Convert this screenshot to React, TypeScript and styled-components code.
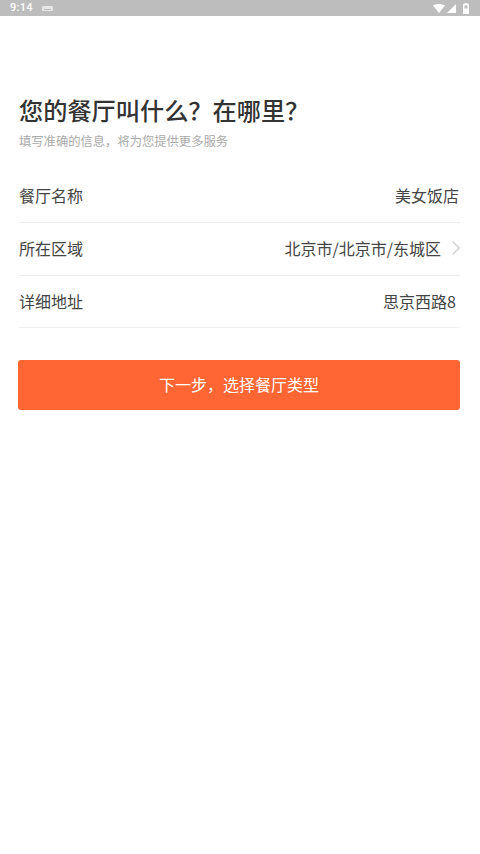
import styled, { createGlobalStyle } from "styled-components";

const GlobalStyle = createGlobalStyle`
  html, body {
    margin: 0;
    padding: 0;
    background: #fff;
  }
  body {
    font-family: "Noto Sans CJK SC", sans-serif;
  }
`;

const Page = styled.div`
  width: 480px;
  height: 854px;
  background: #fff;
  overflow: hidden;
`;

const StatusBar = styled.div`
  height: 16px;
  background: #bdbdbd;
  display: flex;
  align-items: center;
  padding: 0 11px 0 10px;
  color: #fff;
`;

const StatusLeft = styled.div`
  display: flex;
  align-items: center;
  gap: 9px;
  flex: 1;
`;

const Clock = styled.span`
  font-family: "Roboto", sans-serif;
  font-size: 11px;
  font-weight: 500;
  line-height: 16px;
  letter-spacing: 0.3px;
`;

const StatusRight = styled.div`
  display: flex;
  align-items: center;
  gap: 2px;
`;

const BatteryIcon = styled.svg`
  margin-left: 5px;
`;

const Content = styled.main`
  padding: 78px 20px 0 18px;
`;

const Heading = styled.header`
  padding-left: 1px;
`;

const Title = styled.h1`
  margin: 0;
  font-size: 24.2px;
  line-height: 32px;
  font-weight: 500;
  color: #333;
`;

const Subtitle = styled.p`
  margin: 6px 0 0;
  font-size: 12.3px;
  line-height: 18px;
  color: #aaa;
`;

const Form = styled.div`
  margin-top: 20px;
`;

const Row = styled.div`
  height: 52px;
  box-sizing: content-box;
  display: flex;
  align-items: center;
  justify-content: space-between;
  padding-left: 1px;
  border-bottom: 1px solid #eee;
`;

const RowInner = styled.div`
  flex: 1;
  display: flex;
  align-items: center;
  justify-content: space-between;
  padding-bottom: 2px;
  height: 100%;
  box-sizing: border-box;
`;

const LastRow = styled(Row)`
  height: 51px;
  border-bottom-color: #f0f0f0;
`;

const Label = styled.span`
  font-size: 16px;
  line-height: 20px;
  color: #444;
`;

const Value = styled.span<{ $inset?: number }>`
  font-size: 16px;
  line-height: 20px;
  color: #444;
  padding-right: ${(p) => p.$inset ?? 0}px;
`;

const ValueGroup = styled.div`
  display: flex;
  align-items: center;
  gap: 11px;
`;

const NextButton = styled.button`
  display: block;
  width: 100%;
  height: 50px;
  margin-top: 32px;
  border: none;
  border-radius: 3px;
  background: #ff6633;
  color: #fff;
  font-size: 16px;
  font-family: "Noto Sans CJK SC", sans-serif;
  padding: 0 0 2px;
`;

const App = () => {
  return (
    <Page>
      <GlobalStyle />
      <StatusBar>
        <StatusLeft>
          <Clock>9:14</Clock>
          <svg width="11" height="5" viewBox="0 0 11 5">
            <rect width="11" height="5" rx="1" fill="#e6e6e6" />
            <rect x="2" y="3" width="7" height="1" fill="#bdbdbd" />
          </svg>
        </StatusLeft>
        <StatusRight>
          <svg width="12" height="9" viewBox="0 0 12 9">
            <path d="M0 1.5C3.5 -0.5 8.5 -0.5 12 1.5L6 9Z" fill="#fff" />
          </svg>
          <svg width="9" height="9" viewBox="0 0 9 9">
            <path d="M9 0V9H0Z" fill="#fff" />
          </svg>
          <BatteryIcon width="6" height="11" viewBox="0 0 6 11">
            <path d="M1.5 0H4.5V1H6V11H0V1H1.5Z" fill="#fff" />
            <path d="M1.5 2.5H4.5V5.5H1.5Z" fill="#bdbdbd" />
          </BatteryIcon>
        </StatusRight>
      </StatusBar>
      <Content>
        <Heading>
          <Title>您的餐厅叫什么？在哪里？</Title>
          <Subtitle>填写准确的信息，将为您提供更多服务</Subtitle>
        </Heading>
        <Form>
          <Row>
            <RowInner>
              <Label>餐厅名称</Label>
              <Value $inset={1}>美女饭店</Value>
            </RowInner>
          </Row>
          <Row>
            <RowInner>
              <Label>所在区域</Label>
              <ValueGroup>
                <Value>北京市/北京市/东城区</Value>
                <svg width="8" height="14" viewBox="0 0 8 14">
                  <path d="M0.5 0.5L7.3 7L0.5 13.5" fill="none" stroke="#ccc" strokeWidth="1.2" />
                </svg>
              </ValueGroup>
            </RowInner>
          </Row>
          <LastRow>
            <RowInner>
              <Label>详细地址</Label>
              <Value $inset={4}>思京西路8</Value>
            </RowInner>
          </LastRow>
        </Form>
        <NextButton>下一步，选择餐厅类型</NextButton>
      </Content>
    </Page>
  );
};

export default App;
